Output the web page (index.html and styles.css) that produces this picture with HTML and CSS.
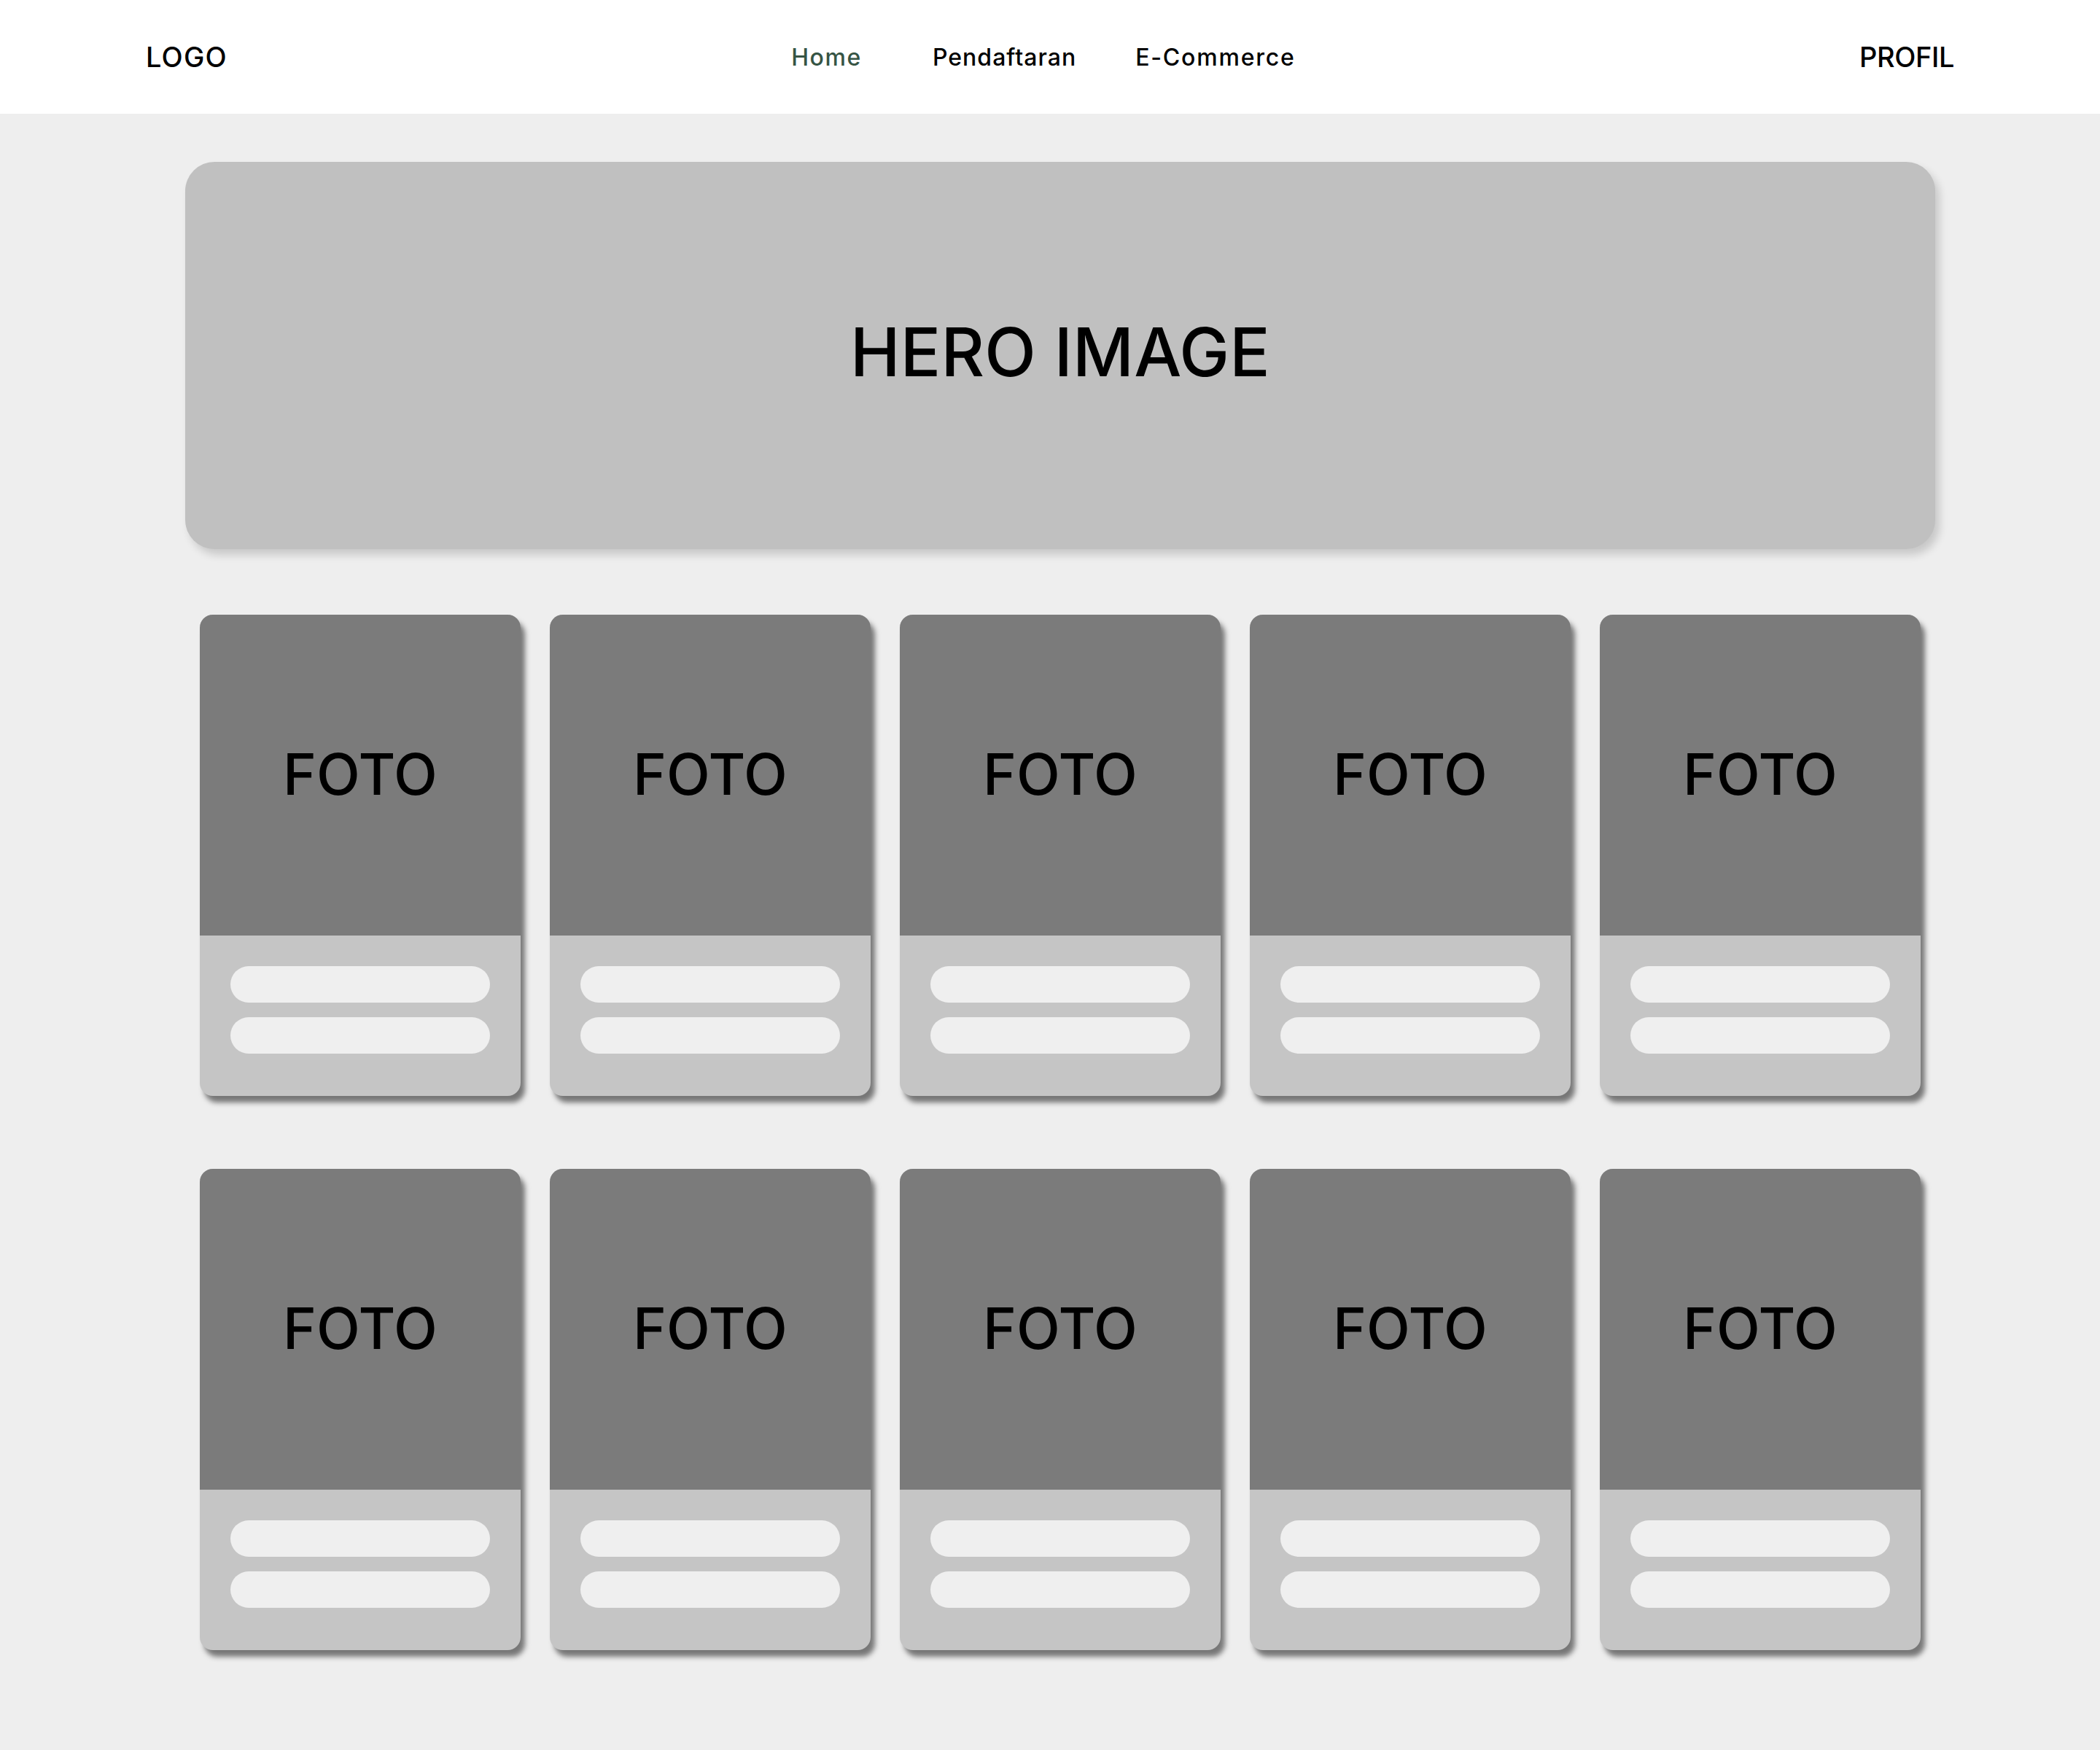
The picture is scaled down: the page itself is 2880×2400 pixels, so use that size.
FILE: index.html
```html
<!DOCTYPE html>
<html lang="id">
<head>
<meta charset="utf-8">
<title>Beranda</title>
<link rel="stylesheet" href="styles.css">
</head>
<body>
<header class="topbar">
  <div class="logo">LOGO</div>
  <nav class="nav">
    <a class="nav-link nav-active" href="#">Home</a>
    <a class="nav-link nav-mid" href="#">Pendaftaran</a>
    <a class="nav-link nav-last" href="#">E-Commerce</a>
  </nav>
  <div class="profil">PROFIL</div>
</header>
<main class="content">
  <section class="hero"><h1 class="hero-title">HERO IMAGE</h1></section>
  <section class="grid">
    <article class="card"><div class="photo">FOTO</div><div class="info"><span class="pill"></span><span class="pill"></span></div></article>
    <article class="card"><div class="photo">FOTO</div><div class="info"><span class="pill"></span><span class="pill"></span></div></article>
    <article class="card"><div class="photo">FOTO</div><div class="info"><span class="pill"></span><span class="pill"></span></div></article>
    <article class="card"><div class="photo">FOTO</div><div class="info"><span class="pill"></span><span class="pill"></span></div></article>
    <article class="card"><div class="photo">FOTO</div><div class="info"><span class="pill"></span><span class="pill"></span></div></article>
    <article class="card"><div class="photo">FOTO</div><div class="info"><span class="pill"></span><span class="pill"></span></div></article>
    <article class="card"><div class="photo">FOTO</div><div class="info"><span class="pill"></span><span class="pill"></span></div></article>
    <article class="card"><div class="photo">FOTO</div><div class="info"><span class="pill"></span><span class="pill"></span></div></article>
    <article class="card"><div class="photo">FOTO</div><div class="info"><span class="pill"></span><span class="pill"></span></div></article>
    <article class="card"><div class="photo">FOTO</div><div class="info"><span class="pill"></span><span class="pill"></span></div></article>
  </section>
</main>
</body>
</html>
```
FILE: styles.css
```css
html, body {
  margin: 0;
  padding: 0;
}
body {
  background: #eeeeee;
  font-family: Inter, "Open Sans", sans-serif;
  color: #000;
  min-height: 2400px;
}
.topbar {
  height: 156px;
  background: #ffffff;
  display: flex;
  align-items: center;
  justify-content: space-between;
  padding: 0 200px;
  box-sizing: border-box;
}
.logo, .profil {
  font-size: 38px;
  font-weight: 500;
}
.logo {
  letter-spacing: 1.2px;
}
.profil {
  letter-spacing: -0.4px;
}
.nav {
  display: flex;
  align-items: center;
}
.nav-link {
  font-size: 32px;
  font-weight: 500;
  color: #000;
  text-decoration: none;
  letter-spacing: 1px;
}
.nav-active {
  color: #365444;
  letter-spacing: 1.6px;
}
.nav-mid {
  margin: 0 81px 0 97px;
}
.nav-last {
  letter-spacing: 1.8px;
}
.content {
  width: 2400px;
  margin: 66px 0 0 254px;
}
.hero {
  height: 531px;
  background: #c0c0c0;
  border-radius: 40px;
  box-shadow: 6px 8px 12px rgba(0, 0, 0, 0.16);
  display: flex;
  align-items: center;
  justify-content: center;
}
.hero-title {
  margin: 0 0 10px 0;
  font-size: 92px;
  font-weight: 500;
  letter-spacing: 0.2px;
}
.grid {
  margin-top: 90px;
  padding: 0 20px;
  display: grid;
  grid-template-columns: repeat(5, 440px);
  column-gap: 40px;
  row-gap: 100px;
}
.card {
  height: 660px;
  border-radius: 18px;
  overflow: hidden;
  background: #c5c5c5;
  box-shadow: 6px 9px 7px rgba(0, 0, 0, 0.5);
  display: flex;
  flex-direction: column;
}
.photo {
  height: 440px;
  box-sizing: border-box;
  padding-bottom: 4px;
  background: #7b7b7b;
  display: flex;
  align-items: center;
  justify-content: center;
  font-size: 78px;
  font-weight: 500;
  letter-spacing: 0;
}
.info {
  flex: 1;
  display: flex;
  flex-direction: column;
  gap: 20px;
  padding: 42px 42px 0 42px;
}
.pill {
  display: block;
  height: 50px;
  border-radius: 25px;
  background: #efefef;
}
```
